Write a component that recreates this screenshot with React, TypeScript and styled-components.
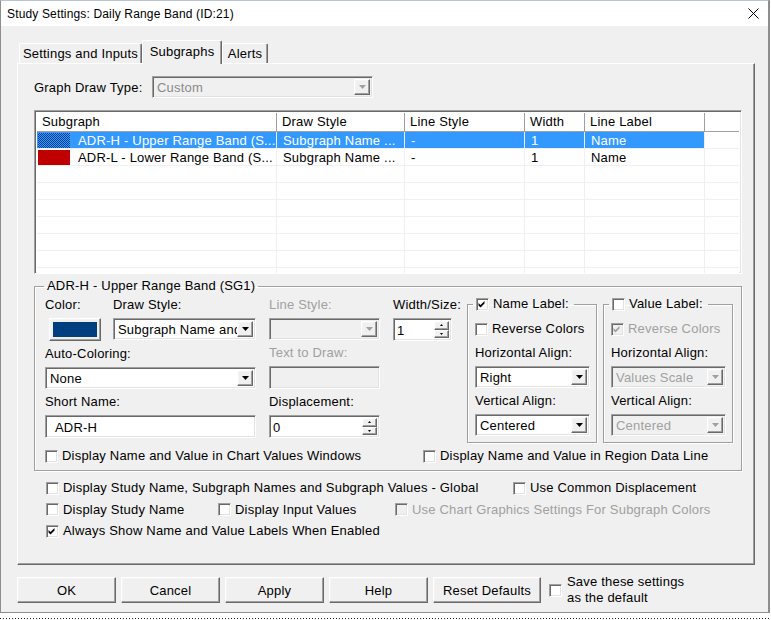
import React from "react";
import styled, { createGlobalStyle, css } from "styled-components";

const GlobalStyle = createGlobalStyle`
  html, body { margin: 0; padding: 0; }
  body {
    background: #ffffff;
    font-family: "Liberation Sans", Arial, sans-serif;
    font-size: 13px;
    letter-spacing: 0.2px;
    color: #000;
  }
  * { box-sizing: border-box; }
`;

const raised = css`
  border: 1px solid;
  border-color: #ffffff #696969 #696969 #ffffff;
  box-shadow: inset -1px -1px 0 #a0a0a0, inset 1px 1px 0 #f4f4f4;
`;

const sunken = css`
  border: 1px solid;
  border-color: #a0a0a0 #ffffff #ffffff #a0a0a0;
  box-shadow: inset 1px 1px 0 #696969, inset -1px -1px 0 #e3e3e3;
`;

/* ---------- window frame ---------- */
const Screen = styled.div`
  width: 771px;
  height: 620px;
  display: flex;
  flex-direction: column;
  overflow: hidden;
  background: #ffffff;
`;

const TopRow = styled.div`
  display: flex;
  height: 613px;
`;

const RightStrip = styled.div`
  flex: 1;
  background: linear-gradient(to right, #8c8c8c 0 1px, #ffffff 1px);
`;

const BottomStrip = styled.div`
  flex: 1;
  border-top: 3px solid #ffffff;
  background: repeating-linear-gradient(to right, #222 0 1px, #fff 1px 3px) 0 2px / 100% 1px no-repeat;
`;

const Window = styled.div`
  width: 769px;
  height: 613px;
  flex: none;
  display: flex;
  flex-direction: column;
  background: #f0f0f0;
  border: 1px solid #8e8e8e;
  border-top-color: #b7c4d3;
`;

const TitleBar = styled.div`
  height: 25px;
  flex: none;
  background: #ffffff;
  display: flex;
  align-items: center;
  justify-content: space-between;
  padding: 0 9px 0 6px;
`;

const TitleText = styled.div`
  font-size: 12px;
  color: #000;
  letter-spacing: 0.15px;
`;

const CloseIcon = styled.svg`
  width: 11px;
  height: 11px;
  display: block;
`;

const Body = styled.div`
  flex: 1;
  display: flex;
  flex-direction: column;
  padding: 14px 0 0 16px;
`;

/* ---------- tabs ---------- */
const TabStrip = styled.div`
  display: flex;
  align-items: flex-end;
  height: 23px;
  padding-left: 2px;
`;

const Tab = styled.div<{ $w: number; $active?: boolean }>`
  width: ${(p) => p.$w}px;
  height: ${(p) => (p.$active ? 24 : 20)}px;
  margin-bottom: ${(p) => (p.$active ? -1 : 0)}px;
  position: relative;
  z-index: ${(p) => (p.$active ? 2 : 1)};
  background: #f0f0f0;
  border-left: 1px solid #ffffff;
  border-top: 1px solid #ffffff;
  border-right: 1px solid #696969;
  box-shadow: inset -1px 0 0 #a0a0a0;
  border-radius: 2px 2px 0 0;
  display: flex;
  align-items: center;
  justify-content: center;
  padding-bottom: ${(p) => (p.$active ? 2 : 0)}px;
  white-space: nowrap;
`;

const TabPanel = styled.div`
  width: 738px;
  height: 502px;
  flex: none;
  border-left: 1px solid #ffffff;
  border-top: 1px solid #ffffff;
  border-right: 1px solid #696969;
  border-bottom: 1px solid #696969;
  box-shadow: inset -1px -1px 0 #a0a0a0;
  padding: 12px 12px 0 16px;
  display: flex;
  flex-direction: column;
`;

/* ---------- generic controls ---------- */
const Text = styled.span<{ $disabled?: boolean }>`
  color: ${(p) => (p.$disabled ? "#a0a0a0" : "#000")};
  white-space: nowrap;
  line-height: 16px;
`;

const FieldLabel = styled.div<{ $disabled?: boolean }>`
  height: 16px;
  line-height: 16px;
  margin-bottom: 5px;
  white-space: nowrap;
  color: ${(p) => (p.$disabled ? "#a0a0a0" : "#000")};
`;

const Field = styled.div<{ $w: number }>`
  width: ${(p) => p.$w}px;
  display: flex;
  flex-direction: column;
`;

const ComboBox = styled.div<{ $w: number; $disabled?: boolean; $h?: number }>`
  ${sunken};
  width: ${(p) => p.$w}px;
  height: ${(p) => p.$h ?? 22}px;
  display: flex;
  padding: 2px;
  background: ${(p) => (p.$disabled ? "#f0f0f0" : "#ffffff")};
`;

const ComboText = styled.div<{ $disabled?: boolean; $color?: string }>`
  flex: 1;
  min-width: 0;
  overflow: hidden;
  white-space: nowrap;
  padding-left: 2px;
  line-height: 18px;
  color: ${(p) => p.$color ?? (p.$disabled ? "#a0a0a0" : "#000")};
`;

const ComboButton = styled.div`
  ${raised};
  width: 16px;
  flex: none;
  background: #f0f0f0;
  display: flex;
  align-items: center;
  justify-content: center;
`;

const Arrow = ({ disabled }: { disabled?: boolean }) => (
  <svg width="7" height="4" viewBox="0 0 7 4">
    <polygon points="0,0 7,0 3.5,4" fill={disabled ? "#a0a0a0" : "#000"} />
  </svg>
);

const Combo = ({
  w,
  value,
  disabled,
  color,
}: {
  w: number;
  value: string;
  disabled?: boolean;
  color?: string;
}) => (
  <ComboBox $w={w} $disabled={disabled}>
    <ComboText $disabled={disabled} $color={color}>
      {value}
    </ComboText>
    <ComboButton>
      <Arrow disabled={disabled} />
    </ComboButton>
  </ComboBox>
);

const EditBox = styled.div<{ $w: number; $disabled?: boolean }>`
  ${sunken};
  width: ${(p) => p.$w}px;
  height: 23px;
  display: flex;
  padding: 2px;
  background: ${(p) => (p.$disabled ? "#f0f0f0" : "#ffffff")};
`;

const EditText = styled.div<{ $pad?: number }>`
  flex: 1;
  padding-left: ${(p) => p.$pad ?? 1}px;
  line-height: 19px;
  white-space: nowrap;
`;

const SpinButtons = styled.div`
  width: 15px;
  flex: none;
  display: flex;
  flex-direction: column;
`;

const SpinBtn = styled.div`
  ${raised};
  flex: 1;
  background: #f0f0f0;
  display: flex;
  align-items: center;
  justify-content: center;
`;

const Spin = ({ w, value }: { w: number; value: string }) => (
  <EditBox $w={w}>
    <EditText>{value}</EditText>
    <SpinButtons>
      <SpinBtn>
        <svg width="3" height="2" viewBox="0 0 3 2">
          <polygon points="1.5,0 3,2 0,2" fill="#000" />
        </svg>
      </SpinBtn>
      <SpinBtn>
        <svg width="3" height="2" viewBox="0 0 3 2">
          <polygon points="0,0 3,0 1.5,2" fill="#000" />
        </svg>
      </SpinBtn>
    </SpinButtons>
  </EditBox>
);

const CheckBoxBox = styled.span<{ $disabled?: boolean }>`
  ${sunken};
  width: 13px;
  height: 13px;
  flex: none;
  display: inline-flex;
  background: ${(p) => (p.$disabled ? "#f0f0f0" : "#ffffff")};
`;

const CheckMark = ({ disabled }: { disabled?: boolean }) => (
  <svg width="11" height="11" viewBox="0 0 11 11" style={{ display: "block" }}>
    <polygon
      points="1.5,4 3.5,6 7.5,2 7.5,4.5 3.5,8.5 1.5,6.5"
      fill={disabled ? "#a0a0a0" : "#000"}
    />
  </svg>
);

const CheckRowItem = styled.label`
  display: inline-flex;
  align-items: center;
  gap: 4px;
  height: 16px;
  white-space: nowrap;
`;

const Check = ({
  label,
  checked,
  disabled,
}: {
  label: React.ReactNode;
  checked?: boolean;
  disabled?: boolean;
}) => (
  <CheckRowItem>
    <CheckBoxBox $disabled={disabled}>{checked ? <CheckMark disabled={disabled} /> : null}</CheckBoxBox>
    <Text $disabled={disabled}>{label}</Text>
  </CheckRowItem>
);

/* ---------- graph draw type ---------- */
const DrawTypeRow = styled.div`
  display: flex;
  align-items: center;
  height: 22px;
`;

const DrawTypeLabel = styled.div`
  width: 118px;
`;

/* ---------- list view ---------- */
const COLS = "240px 128px 120px 60px 120px 1fr";

const ListFrame = styled.div`
  ${sunken};
  width: 708px;
  height: 164px;
  margin-top: 12px;
  padding: 2px;
  background: #ffffff;
  overflow: hidden;
  flex: none;
`;

const HeaderRow = styled.div`
  display: grid;
  grid-template-columns: ${COLS};
  height: 19px;
  border-bottom: 1px solid #a0a0a0;
`;

const HeaderCell = styled.div`
  padding-left: 5px;
  line-height: 18px;
  border-right: 1px solid #a0a0a0;
  background: #ffffff;
  white-space: nowrap;
  &:last-child { border-right: none; }
`;

const BodyRow = styled.div`
  display: grid;
  grid-template-columns: ${COLS};
  height: 17px;
`;

const Cell = styled.div<{ $selected?: boolean }>`
  display: flex;
  align-items: center;
  padding-left: 6px;
  border-right: 1px solid #f0f0f0;
  border-bottom: 1px solid #f0f0f0;
  background: ${(p) => (p.$selected ? "#3399ff" : "#ffffff")};
  color: ${(p) => (p.$selected ? "#ffffff" : "#000")};
  white-space: nowrap;
  overflow: hidden;
  &:last-child { background: #ffffff; border-right: none; }
`;

const NameCell = styled(Cell)`
  padding-left: 1px;
  gap: 8px;
`;

const Swatch = styled.span<{ $color: string; $dither?: boolean }>`
  width: 32px;
  height: 15px;
  flex: none;
  background: ${(p) =>
    p.$dither
      ? `repeating-conic-gradient(${p.$color} 0 25%, #3399ff 0 50%) 0 0 / 2px 2px`
      : p.$color};
`;

/* ---------- group boxes ---------- */
const GroupBox = styled.fieldset`
  margin: 5px 0 0 0;
  width: 708px;
  min-width: 0;
  border: 1px solid #a0a0a0;
  box-shadow: 1px 1px 0 #ffffff, inset 1px 1px 0 #ffffff;
  padding: 4px 0 6px 10px;
  display: flex;
  flex-direction: column;
`;

const GroupLegend = styled.legend`
  padding: 0 3px;
  margin-left: -1px;
  line-height: 14px;
  height: 14px;
  white-space: nowrap;
`;

const MainRow = styled.div`
  display: flex;
  align-items: flex-start;
`;

const Column = styled.div<{ $w: number; $ml: number }>`
  width: ${(p) => p.$w}px;
  margin-left: ${(p) => p.$ml}px;
  display: flex;
  flex-direction: column;
  gap: 5px;
`;

const InlineFields = styled.div`
  display: flex;
  gap: 12px;
`;

const ColorButton = styled.div`
  ${raised};
  width: 52px;
  height: 23px;
  margin-left: 4px;
  padding: 3px;
  background: #f0f0f0;
`;

const ColorFill = styled.div<{ $color: string }>`
  width: 100%;
  height: 100%;
  background: ${(p) => p.$color};
`;

const LabelGroup = styled.fieldset<{ $ml: number }>`
  margin: 0 0 0 ${(p) => p.$ml}px;
  width: 130px;
  min-width: 0;
  border: 1px solid #a0a0a0;
  box-shadow: 1px 1px 0 #ffffff, inset 1px 1px 0 #ffffff;
  padding: 10px 0 6px 7px;
  display: flex;
  flex-direction: column;
`;

const LabelLegend = styled.legend`
  padding: 0 5px 0 3px;
  margin-left: -2px;
  height: 14px;
  line-height: 14px;
  display: flex;
  align-items: center;
`;

const LegendInner = styled.span`
  display: inline-flex;
  align-items: center;
  gap: 4px;
  height: 14px;
  white-space: nowrap;
`;

const GroupField = styled.div<{ $mt: number }>`
  margin-top: ${(p) => p.$mt}px;
  display: flex;
  flex-direction: column;
`;

const GroupBottomRow = styled.div`
  margin-top: 5px;
  display: grid;
  grid-template-columns: 378px auto;
  height: 16px;
`;

const OuterChecks = styled.div`
  margin-top: 9px;
  display: flex;
  flex-direction: column;
  gap: 5.5px;
  padding-left: 12px;
`;

const CheckRow = styled.div<{ $cols: string }>`
  display: grid;
  grid-template-columns: ${(p) => p.$cols};
  height: 16px;
`;

/* ---------- bottom buttons ---------- */
const ButtonRow = styled.div`
  margin-top: 9px;
  height: 32px;
  display: flex;
  align-items: center;
  gap: 5px;
`;

const PushButton = styled.div<{ $w: number }>`
  ${raised};
  width: ${(p) => p.$w}px;
  height: 26px;
  background: #f0f0f0;
  display: flex;
  align-items: center;
  justify-content: center;
  white-space: nowrap;
`;

const SaveDefault = styled.div`
  margin-left: 3px;
  display: flex;
  align-items: center;
  gap: 5px;
`;

const SaveText = styled.div`
  width: 130px;
  line-height: 16px;
`;

type Row = {
  swatch: string;
  dither?: boolean;
  name: string;
  draw: string;
  line: string;
  width: string;
  label: string;
  selected?: boolean;
};

const rows: Row[] = [
  {
    swatch: "#0b3f8c",
    dither: true,
    name: "ADR-H - Upper Range Band (S...",
    draw: "Subgraph Name ...",
    line: "-",
    width: "1",
    label: "Name",
    selected: true,
  },
  {
    swatch: "#c00000",
    name: "ADR-L - Lower Range Band (S...",
    draw: "Subgraph Name ...",
    line: "-",
    width: "1",
    label: "Name",
  },
];

const headers = ["Subgraph", "Draw Style", "Line Style", "Width", "Line Label", ""];

export default function App() {
  return (
    <>
      <GlobalStyle />
      <Screen>
        <TopRow>
          <Window>
            <TitleBar>
              <TitleText>Study Settings: Daily Range Band (ID:21)</TitleText>
              <CloseIcon viewBox="0 0 11 11">
                <path d="M0.5 0.5 L10.5 10.5 M10.5 0.5 L0.5 10.5" stroke="#000" strokeWidth="1" fill="none" />
              </CloseIcon>
            </TitleBar>
            <Body>
              <TabStrip>
                <Tab $w={123}>Settings and Inputs</Tab>
                <Tab $w={80} $active>
                  Subgraphs
                </Tab>
                <Tab $w={46}>Alerts</Tab>
              </TabStrip>
              <TabPanel>
                <DrawTypeRow>
                  <DrawTypeLabel>Graph Draw Type:</DrawTypeLabel>
                  <Combo w={221} value="Custom" disabled color="#8a8a8a" />
                </DrawTypeRow>

                <ListFrame>
                  <HeaderRow>
                    {headers.map((h, i) => (
                      <HeaderCell key={i}>{h}</HeaderCell>
                    ))}
                  </HeaderRow>
                  {rows.map((r, i) => (
                    <BodyRow key={i}>
                      <NameCell $selected={r.selected}>
                        <Swatch $color={r.swatch} $dither={r.dither} />
                        {r.name}
                      </NameCell>
                      <Cell $selected={r.selected}>{r.draw}</Cell>
                      <Cell $selected={r.selected}>{r.line}</Cell>
                      <Cell $selected={r.selected}>{r.width}</Cell>
                      <Cell $selected={r.selected}>{r.label}</Cell>
                      <Cell />
                    </BodyRow>
                  ))}
                  {Array.from({ length: 8 }).map((_, i) => (
                    <BodyRow key={`e${i}`}>
                      {headers.map((_, j) => (
                        <Cell key={j} />
                      ))}
                    </BodyRow>
                  ))}
                </ListFrame>

                <GroupBox>
                  <GroupLegend>ADR-H - Upper Range Band (SG1)</GroupLegend>
                  <MainRow>
                    <Column $w={211} $ml={0}>
                      <InlineFields>
                        <Field $w={56}>
                          <FieldLabel>Color:</FieldLabel>
                          <ColorButton>
                            <ColorFill $color="#003f7f" />
                          </ColorButton>
                        </Field>
                        <Field $w={143}>
                          <FieldLabel>Draw Style:</FieldLabel>
                          <Combo w={143} value="Subgraph Name and Value" />
                        </Field>
                      </InlineFields>
                      <Field $w={211}>
                        <FieldLabel>Auto-Coloring:</FieldLabel>
                        <Combo w={211} value="None" />
                      </Field>
                      <Field $w={211}>
                        <FieldLabel>Short Name:</FieldLabel>
                        <EditBox $w={211}>
                          <EditText $pad={7}>ADR-H</EditText>
                        </EditBox>
                      </Field>
                    </Column>

                    <Column $w={111} $ml={13}>
                      <Field $w={111}>
                        <FieldLabel $disabled>Line Style:</FieldLabel>
                        <Combo w={111} value="" disabled />
                      </Field>
                      <Field $w={111}>
                        <FieldLabel $disabled>Text to Draw:</FieldLabel>
                        <EditBox $w={111} $disabled>
                          <EditText />
                        </EditBox>
                      </Field>
                      <Field $w={111}>
                        <FieldLabel>Displacement:</FieldLabel>
                        <Spin w={111} value="0" />
                      </Field>
                    </Column>

                    <Column $w={59} $ml={13}>
                      <Field $w={59}>
                        <FieldLabel>Width/Size:</FieldLabel>
                        <Spin w={59} value="1" />
                      </Field>
                    </Column>

                    <LabelGroup $ml={15}>
                      <LabelLegend>
                        <LegendInner>
                          <CheckBoxBox>
                            <CheckMark />
                          </CheckBoxBox>
                          <Text>Name Label:</Text>
                        </LegendInner>
                      </LabelLegend>
                      <Check label="Reverse Colors" />
                      <GroupField $mt={8}>
                        <FieldLabel>Horizontal Align:</FieldLabel>
                        <Combo w={115} value="Right" />
                      </GroupField>
                      <GroupField $mt={5}>
                        <FieldLabel>Vertical Align:</FieldLabel>
                        <Combo w={115} value="Centered" />
                      </GroupField>
                    </LabelGroup>

                    <LabelGroup $ml={6}>
                      <LabelLegend>
                        <LegendInner>
                          <CheckBoxBox />
                          <Text>Value Label:</Text>
                        </LegendInner>
                      </LabelLegend>
                      <Check label="Reverse Colors" checked disabled />
                      <GroupField $mt={8}>
                        <FieldLabel>Horizontal Align:</FieldLabel>
                        <Combo w={115} value="Values Scale" disabled />
                      </GroupField>
                      <GroupField $mt={5}>
                        <FieldLabel>Vertical Align:</FieldLabel>
                        <Combo w={115} value="Centered" disabled />
                      </GroupField>
                    </LabelGroup>
                  </MainRow>
                  <GroupBottomRow>
                    <Check label="Display Name and Value in Chart Values Windows" />
                    <Check label="Display Name and Value in Region Data Line" />
                  </GroupBottomRow>
                </GroupBox>

                <OuterChecks>
                  <CheckRow $cols="467px auto">
                    <Check label="Display Study Name, Subgraph Names and Subgraph Values - Global" />
                    <Check label="Use Common Displacement" />
                  </CheckRow>
                  <CheckRow $cols="172px 177px auto">
                    <Check label="Display Study Name" />
                    <Check label="Display Input Values" />
                    <Check label="Use Chart Graphics Settings For Subgraph Colors" disabled />
                  </CheckRow>
                  <CheckRow $cols="auto">
                    <Check label="Always Show Name and Value Labels When Enabled" checked />
                  </CheckRow>
                </OuterChecks>
              </TabPanel>

              <ButtonRow>
                <PushButton $w={99}>OK</PushButton>
                <PushButton $w={99}>Cancel</PushButton>
                <PushButton $w={99}>Apply</PushButton>
                <PushButton $w={99}>Help</PushButton>
                <PushButton $w={108}>Reset Defaults</PushButton>
                <SaveDefault>
                  <CheckBoxBox />
                  <SaveText>Save these settings as the default</SaveText>
                </SaveDefault>
              </ButtonRow>
            </Body>
          </Window>
          <RightStrip />
        </TopRow>
        <BottomStrip />
      </Screen>
    </>
  );
}
